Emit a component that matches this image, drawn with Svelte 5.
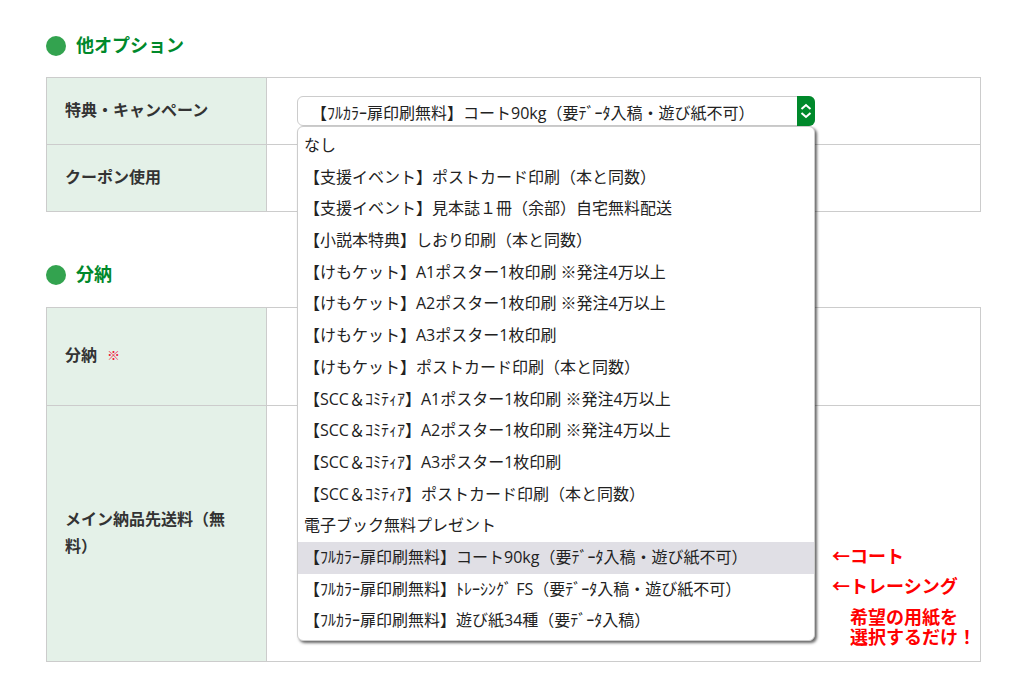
<script>
	const options = [
		{ label: 'なし' },
		{ label: '【支援イベント】ポストカード印刷（本と同数）' },
		{ label: '【支援イベント】見本誌１冊（余部）自宅無料配送' },
		{ label: '【小説本特典】しおり印刷（本と同数）' },
		{ label: '【けもケット】A1ポスター1枚印刷 ※発注4万以上' },
		{ label: '【けもケット】A2ポスター1枚印刷 ※発注4万以上' },
		{ label: '【けもケット】A3ポスター1枚印刷' },
		{ label: '【けもケット】ポストカード印刷（本と同数）' },
		{ label: '【SCC＆ｺﾐﾃｨｱ】A1ポスター1枚印刷 ※発注4万以上' },
		{ label: '【SCC＆ｺﾐﾃｨｱ】A2ポスター1枚印刷 ※発注4万以上' },
		{ label: '【SCC＆ｺﾐﾃｨｱ】A3ポスター1枚印刷' },
		{ label: '【SCC＆ｺﾐﾃｨｱ】ポストカード印刷（本と同数）' },
		{ label: '電子ブック無料プレゼント' },
		{ label: '【ﾌﾙｶﾗｰ扉印刷無料】コート90kg（要ﾃﾞｰﾀ入稿・遊び紙不可）', active: true },
		{ label: '【ﾌﾙｶﾗｰ扉印刷無料】ﾄﾚｰｼﾝｸﾞ FS（要ﾃﾞｰﾀ入稿・遊び紙不可）' },
		{ label: '【ﾌﾙｶﾗｰ扉印刷無料】遊び紙34種（要ﾃﾞｰﾀ入稿）' }
	];
</script>

<main>
	<h2 class="heading"><span class="dot"></span><span class="title">他オプション</span></h2>
	<div class="table first">
		<div class="row short">
			<div class="label">特典・キャンペーン</div>
			<div class="cell">
				<div class="select">
					<span class="value">【ﾌﾙｶﾗｰ扉印刷無料】コート90kg（要ﾃﾞｰﾀ入稿・遊び紙不可）</span>
					<span class="arrow">
						<svg width="14" height="20" viewBox="0 0 14 20" fill="none" stroke="#fff" stroke-width="2">
							<path d="M2.500 8 7 4l4.500 4" />
							<path d="M2.500 12 7 16l4.500-4" />
						</svg>
					</span>
					<ul class="menu">
						{#each options as opt}
							<li class:active={opt.active}>{opt.label}</li>
						{/each}
					</ul>
				</div>
			</div>
		</div>
		<div class="row short">
			<div class="label">クーポン使用</div>
			<div class="cell"></div>
		</div>
	</div>

	<h2 class="heading second"><span class="dot"></span><span class="title">分納</span></h2>
	<div class="table">
		<div class="row mid">
			<div class="label">分納<span class="req">※</span></div>
			<div class="cell"></div>
		</div>
		<div class="row tall">
			<div class="label">メイン納品先送料（無料）</div>
			<div class="cell notes-cell">
				<div class="notes">
					<p class="note">←コート</p>
					<p class="note">←トレーシング</p>
					<p class="note wish">希望の用紙を<br />選択するだけ！</p>
				</div>
			</div>
		</div>
	</div>
</main>

<style>
	:global(body) {
		margin: 0;
		background: #fff;
		color: #333;
		font-family: 'Noto Sans CJK JP', 'Noto Sans', sans-serif;
		font-size: 16px;
	}

	main {
		height: 693px;
		overflow: hidden;
		box-sizing: border-box;
		padding: 33px 36px 0 46px;
	}

	.heading {
		display: flex;
		align-items: center;
		gap: 10px;
		height: 26px;
		margin: 0 0 18px;
		font-size: 18px;
		font-weight: 700;
		color: #00892b;
	}

	.heading.second {
		margin-bottom: 19px;
	}

	.title {
		margin-bottom: 4px;
	}

	.dot {
		width: 20px;
		height: 20px;
		border-radius: 50%;
		background: #33a34f;
	}

	.table {
		border: 1px solid #ccc;
		border-bottom: 0;
	}

	.first {
		margin-bottom: 50px;
	}

	.row {
		display: grid;
		grid-template-columns: 220px 1fr;
		border-bottom: 1px solid #ccc;
	}

	.short {
		height: 66px;
	}

	.mid {
		height: 97px;
	}

	.tall {
		height: 255px;
	}

	.label {
		display: flex;
		align-items: center;
		flex-wrap: wrap;
		align-content: center;
		padding: 0 18px 4px;
		background: #e4f1e8;
		border-right: 1px solid #ccc;
		font-weight: 700;
		line-height: 27px;
	}

	.req {
		margin-left: 10px;
		font-size: 13px;
		font-weight: 400;
		color: #f0143c;
	}

	.cell {
		position: relative;
		padding: 18px 30px 0;
	}

	.select {
		position: relative;
		display: flex;
		width: 518px;
		height: 30px;
		box-sizing: border-box;
		border: 1px solid #ccc;
		border-radius: 6px;
		color: #222;
	}

	.value {
		flex: 1;
		padding-left: 13px;
		white-space: nowrap;
		line-height: 32px;
		font-family: 'Open Sans', 'Noto Sans CJK JP', sans-serif;
	}

	.arrow {
		display: flex;
		align-items: center;
		justify-content: center;
		width: 18px;
		margin: -1px -1px -1px 0;
		background: #00892b;
		border-radius: 0 6px 6px 0;
	}

	.menu {
		position: absolute;
		z-index: 2;
		top: 29px;
		left: -1px;
		width: 518px;
		height: 515px;
		box-sizing: border-box;
		margin: 0;
		padding: 3px 0 0;
		list-style: none;
		background: #fff;
		border: 1px solid #ccc;
		border-radius: 6px;
		box-shadow: 2px 2px 3px rgba(0, 0, 0, 0.6);
		font-family: 'Open Sans', 'Noto Sans CJK JP', sans-serif;
	}

	.menu li {
		height: 31.700px;
		padding-left: 6px;
		line-height: 31.700px;
		white-space: nowrap;
	}

	.menu li.active {
		background: #e0dfe5;
	}

	.notes-cell {
		padding: 0;
	}

	.notes {
		position: absolute;
		top: 138px;
		left: 565px;
	}

	.note {
		margin: 0 0 7px;
		font-size: 18px;
		line-height: 23px;
		font-weight: 700;
		color: #f00;
		white-space: nowrap;
	}

	.wish {
		margin: 9px 0 0 18px;
		line-height: 20px;
	}
</style>
